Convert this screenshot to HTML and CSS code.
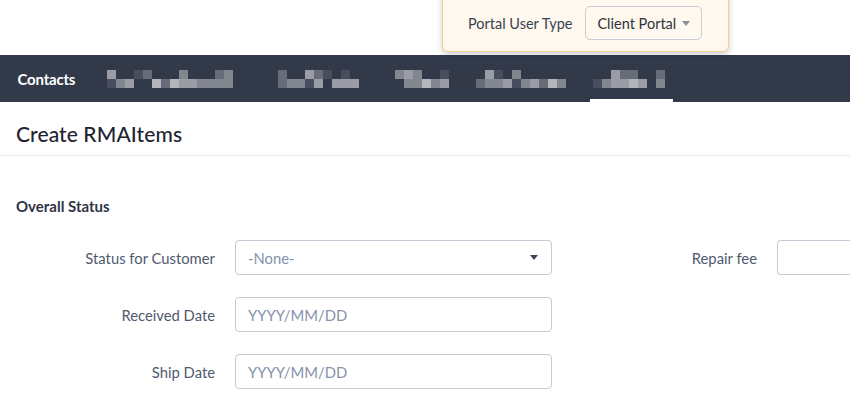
FILE: index.html
```html
<!DOCTYPE html>
<html lang="en">
<head>
    <meta charset="UTF-8">
    <meta name="viewport" content="width=device-width, initial-scale=1.0">
    <title>Create RMAItems</title>
    <link rel="stylesheet" href="styles.css">
</head>
<body>
    <!-- portal preview banner -->
    <div class="portal-bar">
        <span class="portal-label">Portal User Type</span>
        <div class="portal-select">
            <span>Client Portal</span>
            <span class="caret"></span>
        </div>
    </div>

    <div class="topnav">
        <div class="tab tab-text">Contacts</div>
        <!-- the other tab names are blurred in the capture -->
        <div class="tab">
            <div class="mosaic" style="--cols: 16">
                <i class="m4"></i><i></i><i></i><i class="m1"></i><i class="m2"></i><i></i><i></i><i></i><i class="m3"></i><i></i><i></i><i></i><i class="m2"></i><i class="m3"></i><i></i><i></i>
                <i class="m1"></i><i class="m3"></i><i class="m4"></i><i></i><i></i><i class="m5"></i><i class="m2"></i><i class="m5"></i><i class="m4"></i><i class="m4"></i><i class="m3"></i><i class="m3"></i><i class="m3"></i><i class="m3"></i><i></i><i></i>
            </div>
        </div>
        <div class="tab">
            <div class="mosaic" style="--cols: 10">
                <i class="m2"></i><i></i><i></i><i class="m4"></i><i class="m2"></i><i class="m1"></i><i></i><i class="m1"></i><i></i><i></i>
                <i class="m2"></i><i class="m3"></i><i class="m3"></i><i class="m1"></i><i class="m4"></i><i></i><i class="m4"></i><i class="m4"></i><i class="m4"></i><i></i>
            </div>
        </div>
        <div class="tab">
            <div class="mosaic" style="--cols: 6">
                <i class="m3"></i><i class="m4"></i><i class="m3"></i><i></i><i></i><i class="m1"></i>
                <i></i><i class="m3"></i><i class="m3"></i><i class="m5"></i><i class="m3"></i><i class="m4"></i>
            </div>
        </div>
        <div class="tab">
            <div class="mosaic" style="--cols: 10">
                <i></i><i class="m4"></i><i class="m1"></i><i></i><i class="m3"></i><i></i><i></i><i></i><i></i><i></i>
                <i class="m2"></i><i class="m3"></i><i class="m3"></i><i class="m4"></i><i class="m1"></i><i class="m3"></i><i class="m4"></i><i class="m2"></i><i class="m5"></i><i class="m3"></i>
            </div>
        </div>
        <div class="tab active">
            <div class="mosaic" style="--cols: 8">
                <i></i><i></i><i class="m4"></i><i class="m2"></i><i class="m2"></i><i></i><i></i><i class="m2"></i>
                <i class="m1"></i><i class="m3"></i><i class="m4"></i><i class="m4"></i><i class="m5"></i><i class="m4"></i><i></i><i class="m3"></i>
            </div>
        </div>
    </div>

    <div class="page-header">
        <h1>Create RMAItems</h1>
    </div>

    <div class="section">
        <h2>Overall Status</h2>
        <div class="form-grid">
            <label>Status for Customer</label>
            <div class="field select">
                <span class="placeholder">-None-</span>
                <span class="select-caret"></span>
            </div>
            <label>Repair fee</label>
            <!-- cut off by the right edge of the window -->
            <div class="field cut"></div>

            <label>Received Date</label>
            <div class="field"><span class="placeholder">YYYY/MM/DD</span></div>
            <span></span><span></span>

            <label>Ship Date</label>
            <div class="field"><span class="placeholder">YYYY/MM/DD</span></div>
            <span></span><span></span>
        </div>
    </div>
</body>
</html>
```

FILE: styles.css
```css
* {
    margin: 0;
    padding: 0;
    box-sizing: border-box;
}

body {
    font-family: Lato, 'Noto Sans', sans-serif;
    background: #fff;
    color: #2b3040;
    position: relative;
}

/* banner on top */
.portal-bar {
    position: absolute;
    top: -10px;
    left: 442px;
    width: 287px;
    height: 62px;
    background: #fef8ee;
    border: 1px solid #f1cf8f;
    border-radius: 0 0 6px 6px;
    box-shadow: 0 3px 6px rgba(0, 0, 0, 0.18);
    display: flex;
    align-items: center;
    padding: 4px 0 0 25px;
    z-index: 2;
}

.portal-label {
    font-size: 14.5px;
    color: #3b4150;
    margin-right: 13px;
}

.portal-select {
    height: 34px;
    width: 117px;
    border: 1px solid #c9cdd4;
    border-radius: 5px;
    display: flex;
    align-items: center;
    padding: 0 11px;
    font-size: 14.5px;
    color: #2e3340;
    justify-content: space-between;
}

.caret {
    width: 0;
    height: 0;
    border-left: 4px solid transparent;
    border-right: 4px solid transparent;
    border-top: 5px solid #8a8e96;
}

/* nav */
.topnav {
    margin-top: 55px;
    height: 47px;
    background: #323a4a;
    display: flex;
    padding-left: 4px;
}

.tab {
    padding: 0 13.5px;
    display: flex;
    align-items: center;
    position: relative;
}

.tab-text {
    color: #fff;
    font-size: 15px;
    font-weight: 700;
    letter-spacing: -0.2px;
    margin-right: 5px;
}

.tab.active::after {
    content: '';
    position: absolute;
    left: 10px;
    right: 6px;
    bottom: 0;
    height: 3px;
    background: #fff;
}

.mosaic {
    display: grid;
    grid-template-columns: repeat(var(--cols), 9px);
    grid-auto-rows: 9px;
}

.mosaic .m1 { background: #484e5e; }
.mosaic .m2 { background: #676c78; }
.mosaic .m3 { background: #82868f; }
.mosaic .m4 { background: #9a9da5; }
.mosaic .m5 { background: #b4b6bc; }

/* header */
.page-header {
    height: 54px;
    border-bottom: 1px solid #e7eaf0;
    padding-left: 16px;
    display: flex;
    align-items: center;
}

.page-header h1 {
    font-size: 21px;
    font-weight: 500;
    color: #1f2330;
    letter-spacing: 0.1px;
    margin-top: 10px;
}

.section {
    padding-top: 41px;
}

.section h2 {
    font-size: 15px;
    font-weight: 700;
    color: #2e3446;
    padding-left: 16px;
    margin-bottom: 25px;
}

.form-grid {
    display: grid;
    grid-template-columns: 215px 317px 185px 1fr;
    column-gap: 20px;
    row-gap: 22px;
    align-items: center;
}

.form-grid label {
    text-align: right;
    font-size: 14.8px;
    color: #4f5a70;
}

.field {
    height: 35px;
    border: 1px solid #c6cad6;
    border-radius: 4px;
    display: flex;
    align-items: center;
    padding: 0 12px;
    font-size: 14.8px;
}

.field.cut {
    border-right: none;
    border-radius: 4px 0 0 4px;
}

.placeholder {
    color: #8591ac;
}

.select {
    justify-content: space-between;
}

.select-caret {
    width: 0;
    height: 0;
    border-left: 4px solid transparent;
    border-right: 4px solid transparent;
    border-top: 5px solid #3b475d;
    margin-right: 1px;
}
```
